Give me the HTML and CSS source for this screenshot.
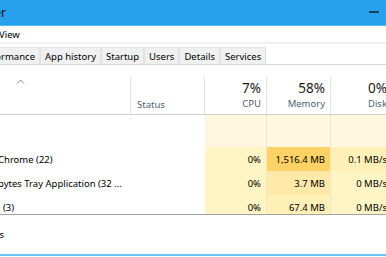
FILE: index.html
```html
<!DOCTYPE html>
<html>
<head>
<meta charset="utf-8">
<link rel="stylesheet" href="styles.css">
</head>
<body>
<div class="window">
  <div class="titlebar">
    <div class="clip title-clip"><span>Task Manager</span></div>
    <div class="minimize"></div>
  </div>
  <div class="menubar"><span class="menu-item">View</span></div>
  <div class="tabs">
    <div class="tab tab-cut"><span>Performance</span></div>
    <div class="tab">App history</div>
    <div class="tab">Startup</div>
    <div class="tab">Users</div>
    <div class="tab">Details</div>
    <div class="tab">Services</div>
  </div>
  <div class="row header">
    <div class="hcell hname">
      <svg class="sort" width="9" height="5" viewBox="0 0 9 5"><polyline points="1,4.5 4.5,1 8,4.5" fill="none" stroke="#8a8a8a" stroke-width="1"/></svg>
    </div>
    <div class="hcell hstatus"><span class="label">Status</span></div>
    <div class="hcell hnum"><span class="pct">7%</span><span class="label">CPU</span></div>
    <div class="hcell hnum"><span class="pct">58%</span><span class="label">Memory</span></div>
    <div class="hcell hnum hdisk"><span class="pct">0%</span><span class="label">Disk</span></div>
  </div>
  <div class="list">
    <div class="row group">
      <div class="cell"></div>
      <div class="cell"></div>
      <div class="cell num t-group"></div>
      <div class="cell num t-group"></div>
      <div class="cell num t-group"></div>
    </div>
    <div class="row item">
      <div class="cell name"><span class="n1">Chrome (22)</span></div>
      <div class="cell"></div>
      <div class="cell num t-low">0%</div>
      <div class="cell num t-high">1,516.4 MB</div>
      <div class="cell num t-mid">0.1 MB/s</div>
    </div>
    <div class="row item">
      <div class="cell name"><span class="n2">bytes Tray Application (32 ...</span></div>
      <div class="cell"></div>
      <div class="cell num t-low">0%</div>
      <div class="cell num t-med">3.7 MB</div>
      <div class="cell num t-low">0 MB/s</div>
    </div>
    <div class="row item">
      <div class="cell name"><span class="n3">(3)</span></div>
      <div class="cell"></div>
      <div class="cell num t-low">0%</div>
      <div class="cell num t-mid">67.4 MB</div>
      <div class="cell num t-low">0 MB/s</div>
    </div>
  </div>
  <div class="footer">
    <div class="clip footer-clip"><span>Fewer details</span></div>
  </div>
</div>
</body>
</html>
```
FILE: styles.css
```css
* { box-sizing: border-box; }

html, body {
  margin: 0;
  padding: 0;
}

body {
  width: 386px;
  height: 257px;
  overflow: hidden;
  background: #ffffff;
  font-family: "Noto Sans", "Open Sans", sans-serif;
  font-size: 9.5px;
  color: #000000;
}

.window {
  width: 386px;
  height: 257px;
  overflow: hidden;
}

.clip {
  display: flex;
  justify-content: flex-end;
  overflow: hidden;
  white-space: nowrap;
  flex: none;
}

/* Title bar */
.titlebar {
  height: 26px;
  background: #27a1ec;
  border-bottom: 1px solid #55b6f1;
  display: flex;
  align-items: center;
  justify-content: space-between;
}

.title-clip {
  width: 6px;
  font-size: 12px;
  color: #0b0b0b;
  margin-top: -1px;
}

.minimize {
  width: 10px;
  height: 2px;
  background: #17405f;
  margin-right: 7px;
  margin-top: -1px;
}

/* Menu bar */
.menubar {
  height: 18px;
  display: flex;
  align-items: center;
  border-bottom: 2px solid #f0f0f0;
  white-space: nowrap;
}

.menu-item {
  margin-left: -1px;
  margin-top: 1px;
}

/* Tabs */
.tabs {
  height: 21px;
  display: flex;
  align-items: flex-end;
  border-bottom: 1px solid #d9d9d9;
  white-space: nowrap;
}

.tab {
  height: 17px;
  padding: 1px 4px 0;
  background: #f0f0f0;
  border: 1px solid #e2e2e2;
  border-bottom: 0;
  display: flex;
  align-items: center;
  justify-content: center;
}

.tab-cut {
  width: 40px;
  justify-content: flex-end;
  overflow: hidden;
  padding-right: 4px;
  border-left: 0;
}

/* Grid rows */
.row {
  display: grid;
  grid-template-columns: 131px 74px 62px 64px 62px;
  white-space: nowrap;
}

.header {
  height: 50px;
  border-bottom: 1px solid #cfcfcf;
  align-items: end;
}

.hcell {
  height: 37px;
  border-right: 1px solid #e3e3e3;
  display: flex;
  flex-direction: column;
  padding: 2px 5px 0;
}

.hname {
  padding-left: 16px;
  padding-top: 2px;
}

.sort {
  display: block;
}

.hstatus {
  justify-content: flex-end;
  padding-left: 6px;
  padding-bottom: 2px;
}

.hnum {
  align-items: flex-end;
}

.pct {
  font-size: 13.5px;
  line-height: 18px;
  color: #1a1a1a;
}

.label {
  line-height: 14px;
  color: #4d6079;
}

/* List */
.list {
  height: 100px;
  overflow: hidden;
  border-bottom: 1px solid #a3a3a3;
}

.group {
  height: 32px;
}

.item {
  height: 24px;
}

.cell {
  display: flex;
  align-items: center;
  padding: 0 5px;
  overflow: hidden;
}

.cell.num {
  justify-content: flex-end;
  border-right: 1px solid #f1e6c6;
}

.cell.name {
  padding: 0;
}

.n1 { margin-left: -2px; }
.n2 { margin-left: -2px; }
.n3 { margin-left: 3px; }

.t-group { background: #fff7df; }
.t-low   { background: #fff4c4; }
.t-mid   { background: #fff0b8; }
.t-med   { background: #ffe9a8; }
.t-high  { background: #ffd266; }

/* Footer */
.footer {
  height: 41px;
  display: flex;
  align-items: center;
  border-bottom: 2px solid #6cc3f5;
}

.footer-clip {
  width: 4px;
}
```
